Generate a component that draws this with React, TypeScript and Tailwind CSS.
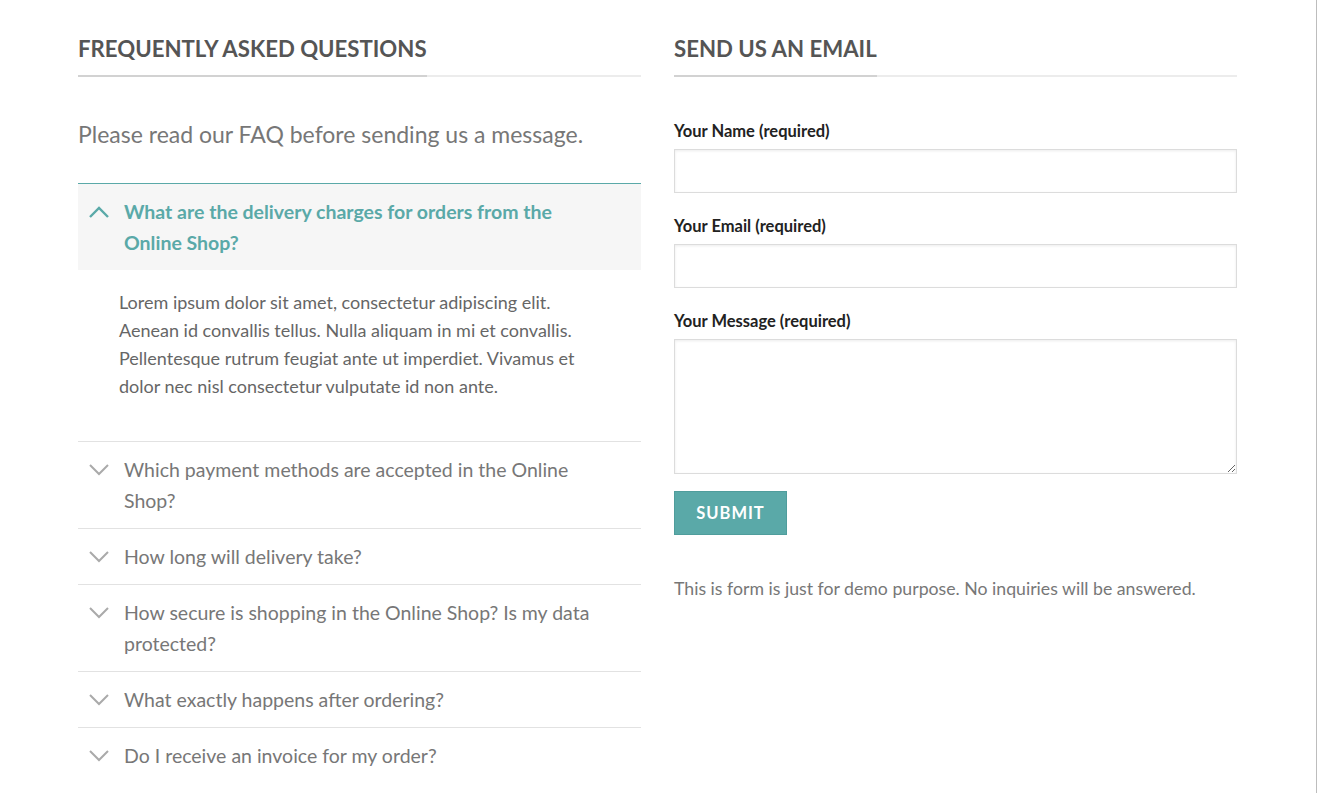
import { useState } from "react";

const faqs = [
  {
    q: "What are the delivery charges for orders from the Online Shop?",
    a: "Lorem ipsum dolor sit amet, consectetur adipiscing elit. Aenean id convallis tellus. Nulla aliquam in mi et convallis. Pellentesque rutrum feugiat ante ut imperdiet. Vivamus et dolor nec nisl consectetur vulputate id non ante.",
  },
  { q: "Which payment methods are accepted in the Online Shop?", a: "" },
  { q: "How long will delivery take?", a: "" },
  { q: "How secure is shopping in the Online Shop? Is my data protected?", a: "" },
  { q: "What exactly happens after ordering?", a: "" },
  { q: "Do I receive an invoice for my order?", a: "" },
];

const Chevron = ({ up }: { up: boolean }) => (
  <svg width="20" height="12" viewBox="0 0 20 12" fill="none" className="shrink-0">
    {up ? (
      <path d="M1 11 L10 2 L19 11" stroke="#5aa9a8" strokeWidth="2.4" />
    ) : (
      <path d="M1 1 L10 10 L19 1" stroke="#aaaaaa" strokeWidth="2" />
    )}
  </svg>
);

const SectionTitle = ({ children }: { children: string }) => (
  <div className="border-b-2 border-[#ececec]">
    <h2 className="inline-block text-[22.2px] leading-[30px] font-bold uppercase text-[#555] pt-[34px] pb-[11px] border-b-2 border-[#d2d2d2] -mb-[2px]">
      {children}
    </h2>
  </div>
);

const fieldCls = "block w-full border border-[#dcdcdc] shadow-[inset_0_1px_3px_rgba(0,0,0,0.08)] outline-none px-3";
const labelCls = "block text-[16.5px] leading-[20px] font-bold text-[#222] mb-[8px]";

export default function App() {
  const [open, setOpen] = useState(0);

  return (
    <div className="min-h-screen w-full bg-white border-r border-[#bdbdbd] font-['Lato','Open_Sans',sans-serif]">
      <div className="w-[1159px] ml-[78px] grid grid-cols-2 gap-x-[33px]">
        {/* FAQ */}
        <div>
          <SectionTitle>Frequently Asked Questions</SectionTitle>
          <p className="text-[23px] leading-[30px] text-[#777] mt-[42px] mb-[34px]">
            Please read our FAQ before sending us a message.
          </p>
          <div>
            {faqs.map((f, i) => {
              const isOpen = open === i;
              return (
                <div
                  key={f.q}
                  className={isOpen ? "border-t border-t-[#5aa9a8]" : "border-t border-t-[#e2e2e2]"}
                >
                  <button
                    onClick={() => setOpen(isOpen ? -1 : i)}
                    className={`w-full flex items-start gap-[15px] pl-[11px] pr-[30px] py-[12px] text-left cursor-pointer ${isOpen ? "bg-[#f6f6f6]" : ""}`}
                  >
                    <span className="mt-[10px]">
                      <Chevron up={isOpen} />
                    </span>
                    <span
                      className={`text-[19.5px] leading-[31px] ${isOpen ? "font-bold text-[#5aa9a8]" : "text-[#777]"}`}
                    >
                      {f.q}
                    </span>
                  </button>
                  {isOpen && f.a && (
                    <div className="px-[41px] pt-[18px] pb-[41px] text-[18px] leading-[28px] text-[#666]">
                      {f.a}
                    </div>
                  )}
                </div>
              );
            })}
          </div>
        </div>

        {/* Contact form */}
        <div>
          <SectionTitle>Send us an Email</SectionTitle>
          <form className="mt-[44px]" onSubmit={(e) => e.preventDefault()}>
            <label className={labelCls}>Your Name (required)</label>
            <input type="text" className={`${fieldCls} h-[44px] mb-[23px]`} />
            <label className={labelCls}>Your Email (required)</label>
            <input type="email" className={`${fieldCls} h-[44px] mb-[23px]`} />
            <label className={labelCls}>Your Message (required)</label>
            <textarea className={`${fieldCls} h-[135px] py-2 mb-[17px]`} />
            <button
              type="submit"
              className="w-[113px] h-[44px] bg-[#5aa9a8] border border-[#4f9d9c] text-white font-bold uppercase text-[16.5px] tracking-[1px]"
            >
              Submit
            </button>
          </form>
          <p className="mt-[41px] text-[17.7px] leading-[26px] text-[#777]">
            This is form is just for demo purpose. No inquiries will be answered.
          </p>
        </div>
      </div>
    </div>
  );
}
